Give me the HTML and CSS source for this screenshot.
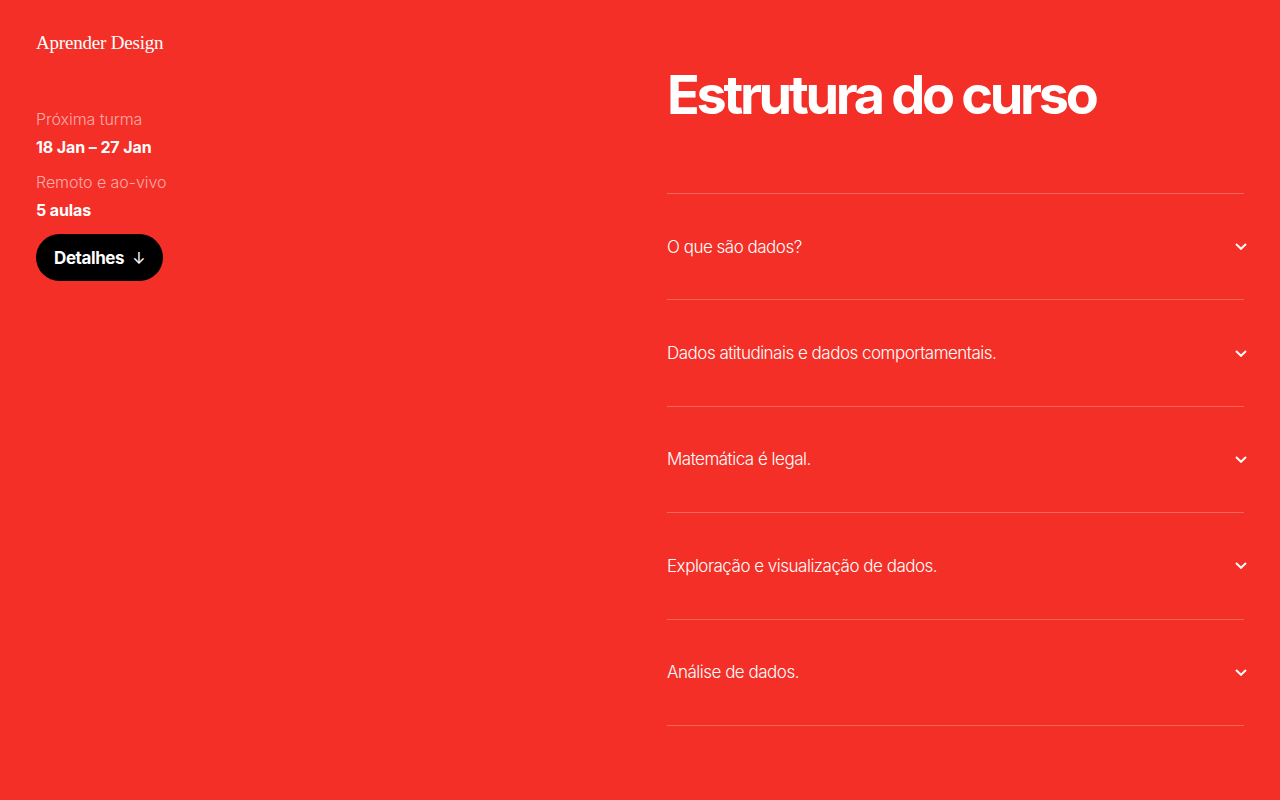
FILE: index.html
```html
<!DOCTYPE html>
<html lang="pt">
<head>
<meta charset="utf-8">
<title>Aprender Design</title>
<link rel="stylesheet" href="styles.css">
</head>
<body>
<div class="page">
  <aside class="side">
    <div class="logo">Aprender Design</div>
    <dl class="info">
      <dt>Próxima turma</dt>
      <dd>18 Jan – 27 Jan</dd>
      <dt>Remoto e ao-vivo</dt>
      <dd>5 aulas</dd>
    </dl>
    <a class="btn" href="#">Detalhes <span class="arrow">↓</span></a>
  </aside>
  <main class="main">
    <h1 class="title">Estrutura do curso</h1>
    <ul class="list">
      <li class="item"><span>O que são dados?</span><svg class="chev" viewBox="0 0 12 7" width="12" height="7"><path d="M1 1 L6 5.8 L11 1" fill="none" stroke="#fff" stroke-width="2"/></svg></li>
      <li class="item"><span>Dados atitudinais e dados comportamentais.</span><svg class="chev" viewBox="0 0 12 7" width="12" height="7"><path d="M1 1 L6 5.8 L11 1" fill="none" stroke="#fff" stroke-width="2"/></svg></li>
      <li class="item"><span>Matemática é legal.</span><svg class="chev" viewBox="0 0 12 7" width="12" height="7"><path d="M1 1 L6 5.8 L11 1" fill="none" stroke="#fff" stroke-width="2"/></svg></li>
      <li class="item"><span>Exploração e visualização de dados.</span><svg class="chev" viewBox="0 0 12 7" width="12" height="7"><path d="M1 1 L6 5.8 L11 1" fill="none" stroke="#fff" stroke-width="2"/></svg></li>
      <li class="item"><span>Análise de dados.</span><svg class="chev" viewBox="0 0 12 7" width="12" height="7"><path d="M1 1 L6 5.8 L11 1" fill="none" stroke="#fff" stroke-width="2"/></svg></li>
    </ul>
  </main>
</div>
</body>
</html>
```

FILE: styles.css
```css
* { box-sizing: border-box; }
html, body { margin: 0; padding: 0; }
body {
  background: #f42f27;
  color: #fff;
  font-family: Inter, "Liberation Sans", sans-serif;
  height: 800px;
  overflow: hidden;
}
.page {
  display: grid;
  grid-template-columns: 631px 577px;
  padding: 0 36px;
}
.side { padding-top: 32px; }
.logo {
  font-family: "Liberation Serif", serif;
  font-size: 19px;
  letter-spacing: -0.2px;
  line-height: 22px;
}
.info { margin: 55px 0 0; }
.info dt {
  font-size: 16px;
  font-weight: 300;
  color: rgba(255,255,255,0.6);
  letter-spacing: -0.05px;
  line-height: 20px;
}
.info dd {
  margin: 8px 0 0;
  font-size: 16px;
  font-weight: 700;
  letter-spacing: -0.1px;
  line-height: 20px;
}
.info dd + dt { margin-top: 15px; }
.btn {
  display: inline-flex;
  align-items: center;
  gap: 8px;
  margin-top: 14px;
  height: 47px;
  padding: 0 18px;
  background: #000;
  color: #fff;
  border-radius: 24px;
  text-decoration: none;
  font-weight: 700;
  font-size: 17px;
  letter-spacing: -0.4px;
}
.arrow { font-weight: 400; font-size: 16px; }
.main { padding-top: 62px; }
.title {
  margin: 0;
  font-size: 54px;
  font-weight: 700;
  letter-spacing: -3.3px;
  line-height: 66px;
}
.list {
  list-style: none;
  margin: 65px 0 0;
  padding: 0;
  border-top: 1px solid rgba(255,255,255,0.25);
}
.item {
  display: flex;
  align-items: center;
  justify-content: space-between;
  height: 106.4px;
  border-bottom: 1px solid rgba(255,255,255,0.25);
  font-size: 17px;
  font-weight: 300;
  letter-spacing: -0.5px;
}
.chev { margin-right: -3px; }
```
